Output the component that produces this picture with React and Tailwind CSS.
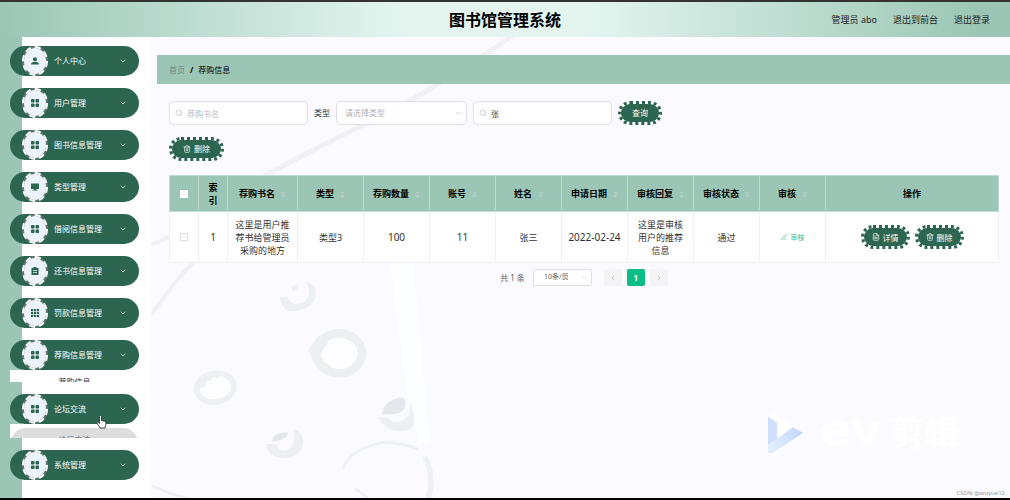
import React, { useState } from "react";
import { ChevronDown, ChevronLeft, ChevronRight, Search, Trash2, FileText, PenLine } from "lucide-react";

const menuItems = [
    { label: "个人中心", icon: "user" },
    { label: "用户管理", icon: "menu" },
    { label: "图书信息管理", icon: "menu" },
    { label: "类型管理", icon: "monitor" },
    { label: "借阅信息管理", icon: "menu" },
    { label: "还书信息管理", icon: "order" },
    { label: "罚款信息管理", icon: "grid" },
    { label: "荐购信息管理", icon: "menu", child: "荐购信息" },
    { label: "论坛交流", icon: "menu", child: "论坛交流", hovered: true },
    { label: "系统管理", icon: "menu" },
];

const sortableColumns = ["荐购书名", "类型", "荐购数量", "账号", "姓名", "申请日期", "审核回复", "审核状态", "审核"];

const rows = [
    {
        id: 1,
        name: "这里是用户推荐书给管理员采购的地方",
        type: "类型3",
        count: 100,
        account: 11,
        user: "张三",
        date: "2022-02-24",
        reply: "这里是审核用户的推荐信息",
        status: "通过",
    },
];

const MenuIcon = ({ name }) => (
    <svg viewBox="0 0 16 16" className="w-2 h-2" fill="currentColor">
        {name === "user" && (
            <>
                <circle cx="8" cy="4.5" r="4" />
                <path d="M0 15c0-4 3-5.500 8-5.500s8 1.500 8 5.500z" />
            </>
        )}
        {name === "menu" && (
            <>
                <rect x="0" y="0" width="7" height="7" rx="1.500" />
                <rect x="9" y="0" width="7" height="7" rx="1.500" />
                <rect x="0" y="9" width="7" height="7" rx="1.500" />
                <rect x="9" y="9" width="7" height="7" rx="1.500" />
            </>
        )}
        {name === "monitor" && <path d="M0 1h16v11h-5v2h2v1H3v-1h2v-2H0z" />}
        {name === "order" && (
            <path fillRule="evenodd" d="M1 2h4V0h6v2h4v14H1zM4 6v1.500h8V6zM4 10v1.500h8V10z" />
        )}
        {name === "grid" &&
            [0, 6, 12].map((y) => [0, 6, 12].map((x) => <rect key={`${x}-${y}`} x={x} y={y} width="4.500" height="4.500" />))}
    </svg>
);

const HandCursor = () => (
    <svg viewBox="0 0 20 28" className="absolute left-[86px] top-[21px] w-[11px] h-[14px] z-10">
        <path
            d="M6 3c0-2.500 4-2.500 4 0v8l6 1.500c2 .5 3 1.500 3 3.500 0 4-1 6-2 10H7C5 22 3 20 1 16c-1-2 1.500-3.500 3-1.500L6 17z"
            fill="#fff"
            stroke="#333"
            strokeWidth="1.800"
        />
    </svg>
);

const SideMenu = () => (
    <nav className="flex flex-col gap-3 pt-[9px] -ml-3 mr-3">
        {menuItems.map((item) => (
            <div key={item.label} className="relative">
                <button
                    type="button"
                    className="flex items-center w-full h-[30px] pl-3 pr-3 rounded-full bg-[#2c6650] text-white text-[8px]"
                >
                    <span className="flex items-center justify-center w-[26px] h-[30px] mr-[6px] rounded-[50%] border-2 border-dashed border-white text-[#2c6650] [background:linear-gradient(#ebf3fc,#ebf3fc)_padding-box,linear-gradient(#6b7571,#6b7571)_border-box]">
                        <MenuIcon name={item.icon} />
                    </span>
                    {item.label}
                    <ChevronDown className="w-2 h-2 ml-auto" />
                </button>
                {item.hovered && <HandCursor />}
                {item.child && !item.hovered && (
                    <div className="h-3 overflow-hidden bg-white pt-2 text-center text-[8px] leading-none text-[#333]">
                        {item.child}
                    </div>
                )}
                {item.child && item.hovered && (
                    <div className="h-[14px] overflow-hidden bg-white px-px pt-1">
                        <div className="h-[30px] rounded-full bg-[#dddddd] pt-2 text-center text-[8px] leading-none text-[#555]">
                            {item.child}
                        </div>
                    </div>
                )}
            </div>
        ))}
    </nav>
);

const DottedButton = ({ icon: Icon, padding = "px-[11px]", children }) => (
    <button
        type="button"
        className={`inline-flex items-center justify-center gap-[3px] h-6 ${padding} rounded-full border-3 border-dotted border-[#2c6650] bg-[#2c6650] bg-clip-padding text-white text-[8px]`}
    >
        {Icon && <Icon className="w-2 h-2" />}
        {children}
    </button>
);

const SearchInput = ({ label, placeholder, value, onChange }) => (
    <div className="relative w-[139px]">
        <Search className="absolute left-[6px] top-2 w-2 h-2 text-[#b4b8c0]" />
        <input
            type="text"
            aria-label={label}
            placeholder={placeholder}
            value={value}
            onChange={(e) => onChange(e.target.value)}
            className="block w-full h-6 pl-[17px] pr-2 rounded border border-[#dcdfe6] bg-white text-[8px] text-[#444] placeholder:text-[#b9bcc4] outline-none"
        />
    </div>
);

const SortCaret = () => (
    <svg viewBox="0 0 8 12" className="inline-block w-[5px] h-[7px] ml-[6px] align-middle" fill="#b4cdc6">
        <path d="M4 0l4 5H0zM4 12l4-5H0z" />
    </svg>
);

// Faint water drops and streaks behind the page content
const Backdrop = () => (
    <svg
        viewBox="0 0 859 461"
        preserveAspectRatio="xMinYMin slice"
        className="absolute inset-0 w-full h-full"
        fill="none"
        aria-hidden="true"
    >
        <path d="M362 -2C330 22 290 45 262 62S160 112 112 140" stroke="#f0f0f5" strokeWidth="5" />
        <path d="M0 208C20 200 40 190 60 170M46 222C34 232 24 246 0 278" stroke="#f0f0f5" strokeWidth="4" />
        <g transform="translate(-1 223) scale(.3333)">
            <path d="M720 10h70l50 540h-35L770 400z" fill="#fdfeff" />
            <ellipse cx="568" cy="280" rx="68" ry="60" fill="#fdfdff" stroke="#ecf0f3" strokeWidth="26" />
            <ellipse cx="196" cy="383" rx="56" ry="43" fill="#fdfdff" stroke="#eef1f4" strokeWidth="17" transform="rotate(-10 196 383)" />
            <g fill="#ecf0f3">
                <path d="M475 270l30-42 40-4-14 28-16 24-6 30-16 2zM510 306l26 6 20 22-14 10-24-16z" />
                <path d="M136 390l10-30 30-20 34 0-4 16-14-6-12 14-10-4-6 20z" />
                <path d="M470 66c24 6 32 26 26 44-6 26-38 46-82 44-12-8-22-22-24-42l22-4c4 12 10 20 22 24 26 0 42-14 44-34 0-14-6-24-8-32z" />
                <path d="M422 80l20-8 4 10-16 14z" />
                <path d="M434 508c24 8 30 34 24 52-10 24-34 36-62 34-28-2-46-18-48-42h34c-2 14 10 22 24 20 16-4 24-18 26-34z" />
                <path d="M366 540c6-14 26-24 48-22-2 16-22 26-48 26z" fill="#e2e6eb" />
                <path d="M696 464c0-28 26-50 64-52 10 10 8 30-2 40-14 12-38 10-62 12z" fill="#e4e8ed" />
                <path d="M686 470c14 2 34 2 42 14 20 8 40-6 50-18l4-40c6 24 12 44 10 68-16 22-50 24-72 12-18-8-30-20-34-36z" />
            </g>
            <path d="M580 625c10-40 60-66 120-78 40 0 70 6 105 20M615 685l40 30" stroke="#edf0f4" strokeWidth="8" />
            <path d="M825 590c20 40 24 80 10 125" stroke="#edf0f4" strokeWidth="16" />
            <path d="M6 678l60 24 50 14" stroke="#eeeff3" strokeWidth="8" />
        </g>
    </svg>
);

const EvWatermark = () => (
    <div className="absolute right-[51px] bottom-[42px] flex items-center gap-4" aria-hidden="true">
        <svg viewBox="0 0 36 46" className="w-[36px] h-[46px]">
            <defs>
                <linearGradient id="evBlue" x1="0" y1="0" x2="1" y2="0">
                    <stop offset="0" stopColor="#e6effd" />
                    <stop offset="1" stopColor="#bfd6fb" />
                </linearGradient>
            </defs>
            <path d="M0 0l36 23-10-4-16 10V12z" fill="#fff" />
            <path d="M0 8l9 6v20L0 38z" fill="#cfe0fc" />
            <path d="M0 36l25-18 10 6L4 44H0z" fill="url(#evBlue)" />
        </svg>
        <div className="flex items-baseline gap-2 font-bold leading-[46px] text-white">
            <span className="text-[46px] font-['DejaVu_Sans',sans-serif]">ev</span>
            <span className="text-[35px]">剪辑</span>
        </div>
    </div>
);

const App = () => {
    const [bookName, setBookName] = useState("");
    const [userName, setUserName] = useState("张");

    return (
        <div className="flex flex-col min-h-screen bg-[#fafaff] text-[#333] font-['Noto_Sans','Noto_Sans_CJK_SC',sans-serif]">
            {/* Header */}
            <header className="grid grid-cols-[1fr_auto_1fr] items-center h-[37px] border-t-2 border-[#333] px-5 bg-[linear-gradient(90deg,#9bc6b5,#e4f5f0_40%,#e4f5f0_58%,#9bc6b5_97%)]">
                <h1 className="col-start-2 text-base font-bold text-black">图书馆管理系统</h1>
                <div className="flex justify-end gap-4 text-[9px] text-[#222]">
                    <span>管理员 abo</span>
                    <a href="#front">退出到前台</a>
                    <a href="#logout">退出登录</a>
                </div>
            </header>

            <div className="flex flex-1">
                {/* Sidebar */}
                <div className="w-[22px] shrink-0 bg-[#9bc6b5]" />
                <aside className="relative w-[129px] shrink-0 bg-white">
                    <SideMenu />
                </aside>

                {/* Content */}
                <main className="relative flex-1 min-w-0 overflow-hidden pl-[6px] pt-[18px]">
                    <Backdrop />
                    <EvWatermark />

                    <div className="relative">
                        <div className="flex items-center gap-[5px] h-[29px] px-3 bg-[#9bc6b5] text-[8px]">
                            <a href="#home" className="text-[#71877e]">首页</a>
                            <span className="font-bold text-black">/</span>
                            <span className="text-black">荐购信息</span>
                        </div>

                        <div className="pl-3 pr-[11px] pt-[17px]">
                            <form className="flex items-center" onSubmit={(e) => e.preventDefault()}>
                                <SearchInput label="荐购书名" placeholder="荐购书名" value={bookName} onChange={setBookName} />
                                <label htmlFor="book-type" className="mx-[6px] text-[8px]">类型</label>
                                <div className="relative w-[131px] mr-[6px]">
                                    <select
                                        id="book-type"
                                        className="block appearance-none w-full h-6 px-2 rounded border border-[#dcdfe6] bg-white text-[8px] text-[#b0b3bb] outline-none"
                                    >
                                        <option>请选择类型</option>
                                    </select>
                                    <ChevronDown className="absolute right-[5px] top-2 w-2 h-2 text-[#c0c4cc]" />
                                </div>
                                <SearchInput label="姓名" value={userName} onChange={setUserName} />
                                <div className="flex ml-[6px]">
                                    <DottedButton>查询</DottedButton>
                                </div>
                            </form>

                            <div className="flex mt-3 mb-[14px]">
                                <DottedButton icon={Trash2}>删除</DottedButton>
                            </div>

                            <table className="w-full table-fixed border-collapse text-center text-[9px] leading-[13px]">
                                <colgroup>
                                    <col className="w-[29px]" />
                                    <col className="w-[29px]" />
                                    <col className="w-[70px]" />
                                    {sortableColumns.slice(1).map((title) => (
                                        <col key={title} className="w-[66px]" />
                                    ))}
                                    <col />
                                </colgroup>
                                <thead>
                                    <tr className="h-9 bg-[#9bc6b5] text-black *:border *:border-[#c0dbd1]">
                                        <th>
                                            <input type="checkbox" aria-label="全选" className="block appearance-none w-2 h-2 mx-auto bg-white border border-white" />
                                        </th>
                                        <th className="px-2">索引</th>
                                        {sortableColumns.map((title) => (
                                            <th key={title} className="whitespace-nowrap">
                                                {title}
                                                <SortCaret />
                                            </th>
                                        ))}
                                        <th>操作</th>
                                    </tr>
                                </thead>
                                <tbody>
                                    {rows.map((row) => (
                                        <tr key={row.id} className="h-[51px] bg-white *:border *:border-[#f0f1f6]">
                                            <td>
                                                <input type="checkbox" aria-label="选择" className="block appearance-none w-2 h-2 mx-auto bg-white border border-[#dcdfe6]" />
                                            </td>
                                            <td className="text-[10px]">{row.id}</td>
                                            <td className="px-[6px]">{row.name}</td>
                                            <td>{row.type}</td>
                                            <td className="text-[10px]">{row.count}</td>
                                            <td className="text-[10px]">{row.account}</td>
                                            <td>{row.user}</td>
                                            <td className="text-[10px] whitespace-nowrap">{row.date}</td>
                                            <td className="px-2">{row.reply}</td>
                                            <td>{row.status}</td>
                                            <td>
                                                <button type="button" className="inline-flex items-center gap-1 text-[7px] text-[#3fb991]">
                                                    <PenLine className="w-[6px] h-[6px]" />
                                                    审核
                                                </button>
                                            </td>
                                            <td>
                                                <div className="flex justify-center gap-[5px]">
                                                    <DottedButton icon={FileText} padding="px-2">详情</DottedButton>
                                                    <DottedButton icon={Trash2} padding="px-2">删除</DottedButton>
                                                </div>
                                            </td>
                                        </tr>
                                    ))}
                                </tbody>
                            </table>

                            {/* Pagination */}
                            <div className="flex items-center justify-center mt-[6px] text-[8px] text-[#606266]">
                                <span className="mr-2">共 1 条</span>
                                <div className="relative w-[59px] mr-3">
                                    <select aria-label="每页条数" className="block appearance-none w-full h-[17px] pl-[10px] pr-4 rounded-xs border border-[#dcdfe6] bg-white text-[7px] outline-none">
                                        <option>10条/页</option>
                                    </select>
                                    <ChevronDown className="absolute right-1 top-[5px] w-[7px] h-[7px] text-[#c0c4cc]" />
                                </div>
                                <div className="flex gap-[5px]">
                                    <button type="button" aria-label="上一页" className="flex items-center justify-center w-[18px] h-[17px] rounded-xs bg-[#f4f4f5]">
                                        <ChevronLeft className="w-2 h-2 text-[#b4b8c0]" />
                                    </button>
                                    <button type="button" className="w-[18px] h-[17px] rounded-xs bg-[#0bbd87] text-white text-[8px] font-bold">1</button>
                                    <button type="button" aria-label="下一页" className="flex items-center justify-center w-[18px] h-[17px] rounded-xs bg-[#f4f4f5]">
                                        <ChevronRight className="w-2 h-2 text-[#b4b8c0]" />
                                    </button>
                                </div>
                            </div>
                        </div>
                    </div>

                    <span className="absolute right-[5px] bottom-0 text-[6px] leading-[10px] text-[#999]">CSDN @wuyue12</span>
                </main>
            </div>
            <div className="h-[2px] bg-black" />
        </div>
    );
};

export default App;
